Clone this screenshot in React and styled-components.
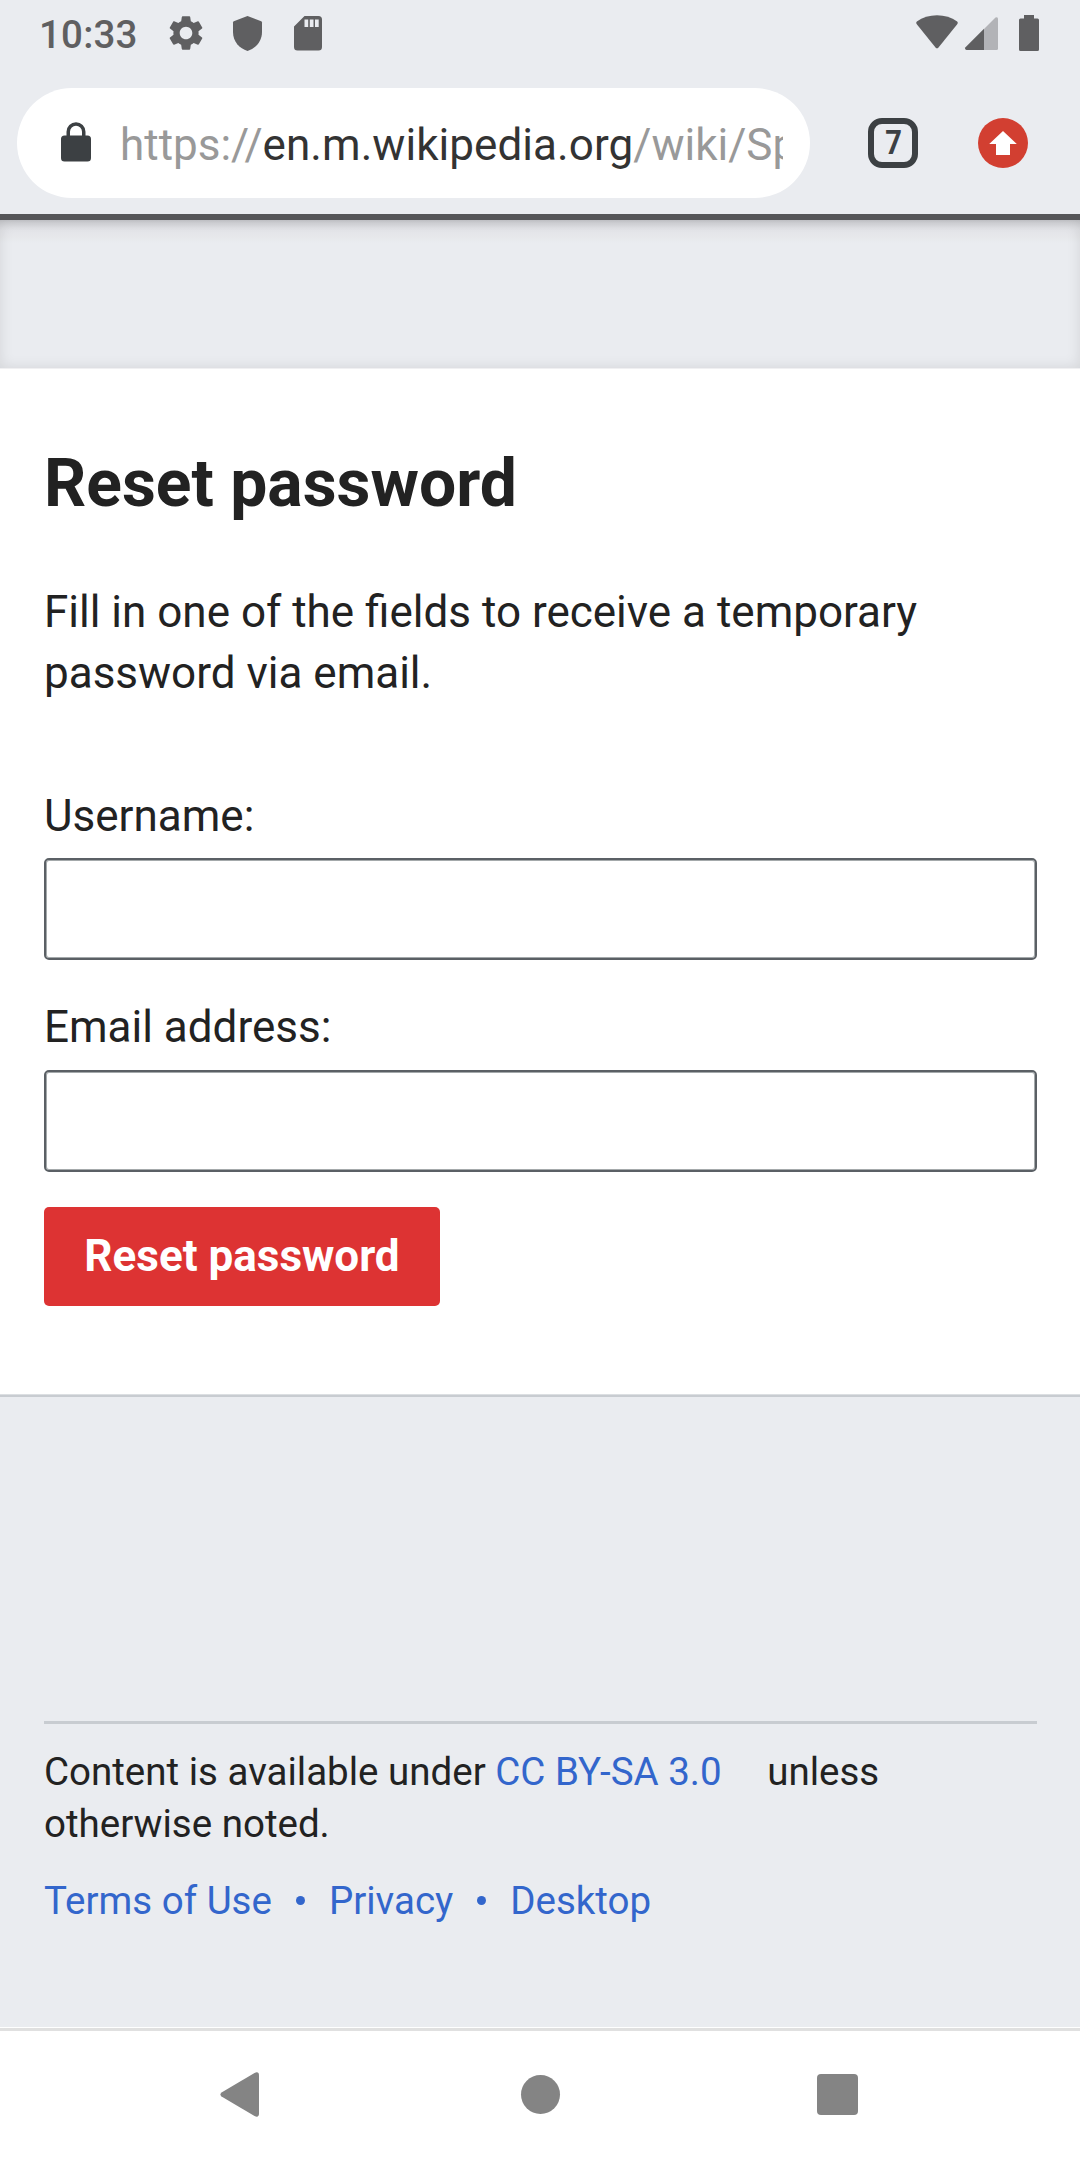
import React from "react";
import styled, { createGlobalStyle } from "styled-components";
import { MdSettings } from "react-icons/md";

const GlobalStyle = createGlobalStyle`
  * { box-sizing: border-box; }
  body {
    margin: 0;
    background: #eaecf0;
    font-family: Roboto, "Liberation Sans", sans-serif;
    color: #222;
  }
  a { color: #36c; text-decoration: none; }
`;

const Screen = styled.div`
  width: 1080px;
  height: 2160px;
  display: flex;
  flex-direction: column;
  overflow: hidden;
  background: #eaecf0;
`;

const StatusBar = styled.div`
  height: 66px;
  flex: none;
  display: flex;
  justify-content: space-between;
  padding: 0 41px 0 39px;
  color: #5f5f61;
`;

const StatusGroup = styled.div`
  display: flex;
  align-items: flex-start;
`;

const Clock = styled.span`
  font-size: 38.5px;
  font-weight: 500;
  line-height: 45px;
  letter-spacing: 0.2px;
  padding-top: 12px;
  width: 127px;
`;

const Glyph = styled.svg`
  display: block;
  flex: none;
  overflow: visible;
  fill: currentColor;
  width: ${(p) => p.$w}px;
  height: ${(p) => p.$h}px;
  margin: ${(p) => p.$top || 0}px 0 0 ${(p) => p.$left || 0}px;
`;

const Gear = styled(MdSettings)`
  display: block;
  width: 42px;
  height: 42px;
  margin: 12px 0 0 -1px;
`;

const Toolbar = styled.div`
  flex: none;
  height: 154px;
  display: flex;
  align-items: flex-start;
  padding: 22px 52px 0 17px;
  border-bottom: 6px solid #555558;
`;

const AddressBar = styled.div`
  width: 793px;
  height: 110px;
  border-radius: 55px;
  background: #fff;
  display: flex;
  align-items: flex-start;
  padding: 0 27px 0 44px;
  color: #3c4043;
`;

const Url = styled.div`
  flex: 1;
  min-width: 0;
  overflow: hidden;
  white-space: nowrap;
  margin-left: 29px;
  padding-top: 31px;
  font-size: 44px;
  line-height: 52px;
  color: #999;
`;

const Host = styled.span`
  color: #333;
  letter-spacing: 0.06px;
`;

const TabCount = styled.div`
  width: 50px;
  height: 50px;
  margin: 30px 0 0 58px;
  border: 6px solid #3c4043;
  border-radius: 14px;
  color: #3c4043;
  display: flex;
  justify-content: center;
  font-size: 33px;
  font-weight: 700;
  line-height: 38px;
`;

const TabDigit = styled.span`
  display: block;
  transform: scaleX(0.88);
`;

const PageHeader = styled.div`
  flex: none;
  height: 149px;
  border-bottom: 1px solid #f0f0f2;
  background: linear-gradient(#c8c9cd 0, #d3d4d8 3px, #dfe0e4 8px, #e4e5e9 11px, #e7e8eb 17px, rgba(234, 236, 240, 0) 23px);
  box-shadow: inset 0 0 14px rgba(0, 0, 0, 0.1);
`;

const Content = styled.main`
  flex: none;
  height: 1028px;
  background: #fff;
  padding: 72px 43px 0 44px;
  border-bottom: 2px solid #c8ccd1;
  box-shadow: inset 0 -1px 0 #dcdfe2;
`;

const Title = styled.h1`
  margin: 0;
  font-size: 66px;
  font-weight: 700;
  line-height: 86px;
`;

const Intro = styled.p`
  margin: 55px 0 0;
  font-size: 44px;
  line-height: 61px;
`;

const Field = styled.label`
  display: block;
  margin-top: ${(p) => p.$gap}px;
  font-size: 44px;
  line-height: 61px;
`;

const TextInput = styled.input`
  display: block;
  width: 993px;
  height: 102px;
  margin-top: ${(p) => p.$gap}px;
  padding: 0 24px;
  border: 2px solid #5b6065;
  border-radius: 5px;
  outline: none;
  background: #fff;
  box-shadow: inset 0 0 0 1px #a4a9ab;
  font: inherit;
`;

const SubmitButton = styled.button`
  display: block;
  width: 396px;
  height: 99px;
  margin: 35px 0 0;
  padding: 0 0 2px;
  border: 0;
  border-radius: 5px;
  background: #d33;
  color: #fff;
  font: 700 44px/52px Roboto, "Liberation Sans", sans-serif;
`;

const Footer = styled.footer`
  flex: 1;
  padding: 324px 43px 0 44px;
  font-size: 38.5px;
`;

const License = styled.p`
  margin: 0;
  padding-top: 22px;
  border-top: 3px solid #c8ccd1;
  line-height: 52px;
`;

const LicenseLink = styled.a`
  padding-right: 36px;
`;

const FooterLinks = styled.nav`
  display: flex;
  align-items: center;
  margin-top: 25px;
  line-height: 52px;
`;

const Dot = styled.span`
  width: 9px;
  height: 9px;
  margin: 0 24px 2px;
  border-radius: 50%;
  background: #36c;
`;

const NavBar = styled.div`
  flex: none;
  height: 133px;
  display: flex;
  align-items: flex-start;
  border-top: 1px solid #fff;
  background: #fff;
  color: #848484;
  box-shadow: inset 0 3px 0 #e0e0e0;
`;

export default function App() {
  return (
    <Screen>
      <GlobalStyle />
      <StatusBar>
        <StatusGroup>
          <Clock>10:33</Clock>
          <Gear />
          <Glyph $w={29} $h={35} $top={16} $left={26} viewBox="0 0 29 35">
            <path d="M14.5 0 28.2 5.2Q29 5.6 29 6.6V16C29 25.5 22.5 32.5 14.5 35 6.500 32.500 0 25.500 0 16V6.600Q0 5.600 .8 5.200Z" />
          </Glyph>
          <Glyph $w={28} $h={35} $top={16} $left={32} viewBox="0 0 28 35">
            <path
              fillRule="evenodd"
              d="M10.500 0H24.500Q28 0 28 3.500V31Q28 34.500 24.500 34.500H3.500Q0 34.500 0 31V10.500ZM10.500 3.500V11H14.200V3.500ZM15.800 3.500V11H19.500V3.500ZM21 3.500V11H24.700V3.500Z"
            />
          </Glyph>
        </StatusGroup>
        <StatusGroup>
          <Glyph $w={42} $h={34} $top={15} viewBox="0 0 42 34">
            <path d="M21 .3C13.500 .3 6.500 2.500 .8 6.500Q-.4 7.500 .6 9L19.500 32.500Q21 34.200 22.500 32.500L41.400 9Q42.400 7.500 41.200 6.500C35.500 2.500 28.500 .3 21 .3Z" />
          </Glyph>
          <Glyph $w={33} $h={33} $top={17} $left={7} viewBox="0 0 33 33">
            <path opacity=".4" d="M19 12 30.500 .6Q33 -.5 33 2V31.500Q33 33 31.500 33H19Z" />
            <path d="M19 11.800V33H1.500Q-.8 32.500 .5 30.300Z" />
          </Glyph>
          <Glyph $w={20} $h={36} $top={15} $left={21} viewBox="0 0 20 36">
            <path d="M5 0H15V3.500H18.500Q20 3.500 20 5V34.500Q20 36 18.500 36H1.500Q0 36 0 34.500V5Q0 3.500 1.500 3.500H5Z" />
          </Glyph>
        </StatusGroup>
      </StatusBar>
      <Toolbar>
        <AddressBar>
          <Glyph $w={30} $h={40} $top={34} viewBox="0 0 30 40">
            <path
              fillRule="evenodd"
              d="M5.500 13.500V9.700A9.500 9.500 0 0 1 24.500 9.700V13.500H26.500Q30 13.500 30 17V36Q30 39.500 26.500 39.500H3.500Q0 39.500 0 36V17Q0 13.500 3.500 13.500ZM9 13.500H21V9.700A6 6 0 0 0 9 9.700Z"
            />
          </Glyph>
          <Url>
            https://<Host>en.m.wikipedia.org</Host>/wiki/Sp
          </Url>
        </AddressBar>
        <TabCount>
          <TabDigit>7</TabDigit>
        </TabCount>
        <Glyph $w={50} $h={50} $top={30} $left={60} viewBox="0 0 50 50">
          <circle cx="25" cy="25" r="25" fill="#d23f31" />
          <path fill="#fff" d="M25 13 38.800 26H32V37H18V26H11.200Z" />
        </Glyph>
      </Toolbar>
      <PageHeader />
      <Content>
        <Title>Reset password</Title>
        <Intro>
          Fill in one of the fields to receive a temporary password via email.
        </Intro>
        <Field $gap={82}>
          Username:
          <TextInput type="text" $gap={11} />
        </Field>
        <Field $gap={37}>
          Email address:
          <TextInput type="text" $gap={12} />
        </Field>
        <SubmitButton>Reset password</SubmitButton>
      </Content>
      <Footer>
        <License>
          Content is available under <LicenseLink>CC BY-SA 3.0</LicenseLink> unless
          <br />
          otherwise noted.
        </License>
        <FooterLinks>
          <a>Terms of Use</a>
          <Dot />
          <a>Privacy</a>
          <Dot />
          <a>Desktop</a>
        </FooterLinks>
      </Footer>
      <NavBar>
        <Glyph $w={39} $h={45} $top={44} $left={220} viewBox="0 0 39 45">
          <path d="M1.500 20.400 34.500 .9Q39 -1 39 3.500V41.500Q39 46 34.500 44.100L1.500 24.600Q-.7 22.500 1.500 20.400Z" />
        </Glyph>
        <Glyph $w={39} $h={39} $top={47} $left={262} viewBox="0 0 39 39">
          <circle cx="19.500" cy="19.500" r="19.500" />
        </Glyph>
        <Glyph $w={41} $h={41} $top={46} $left={257} viewBox="0 0 41 41">
          <rect width="41" height="41" rx="4" />
        </Glyph>
      </NavBar>
    </Screen>
  );
}
